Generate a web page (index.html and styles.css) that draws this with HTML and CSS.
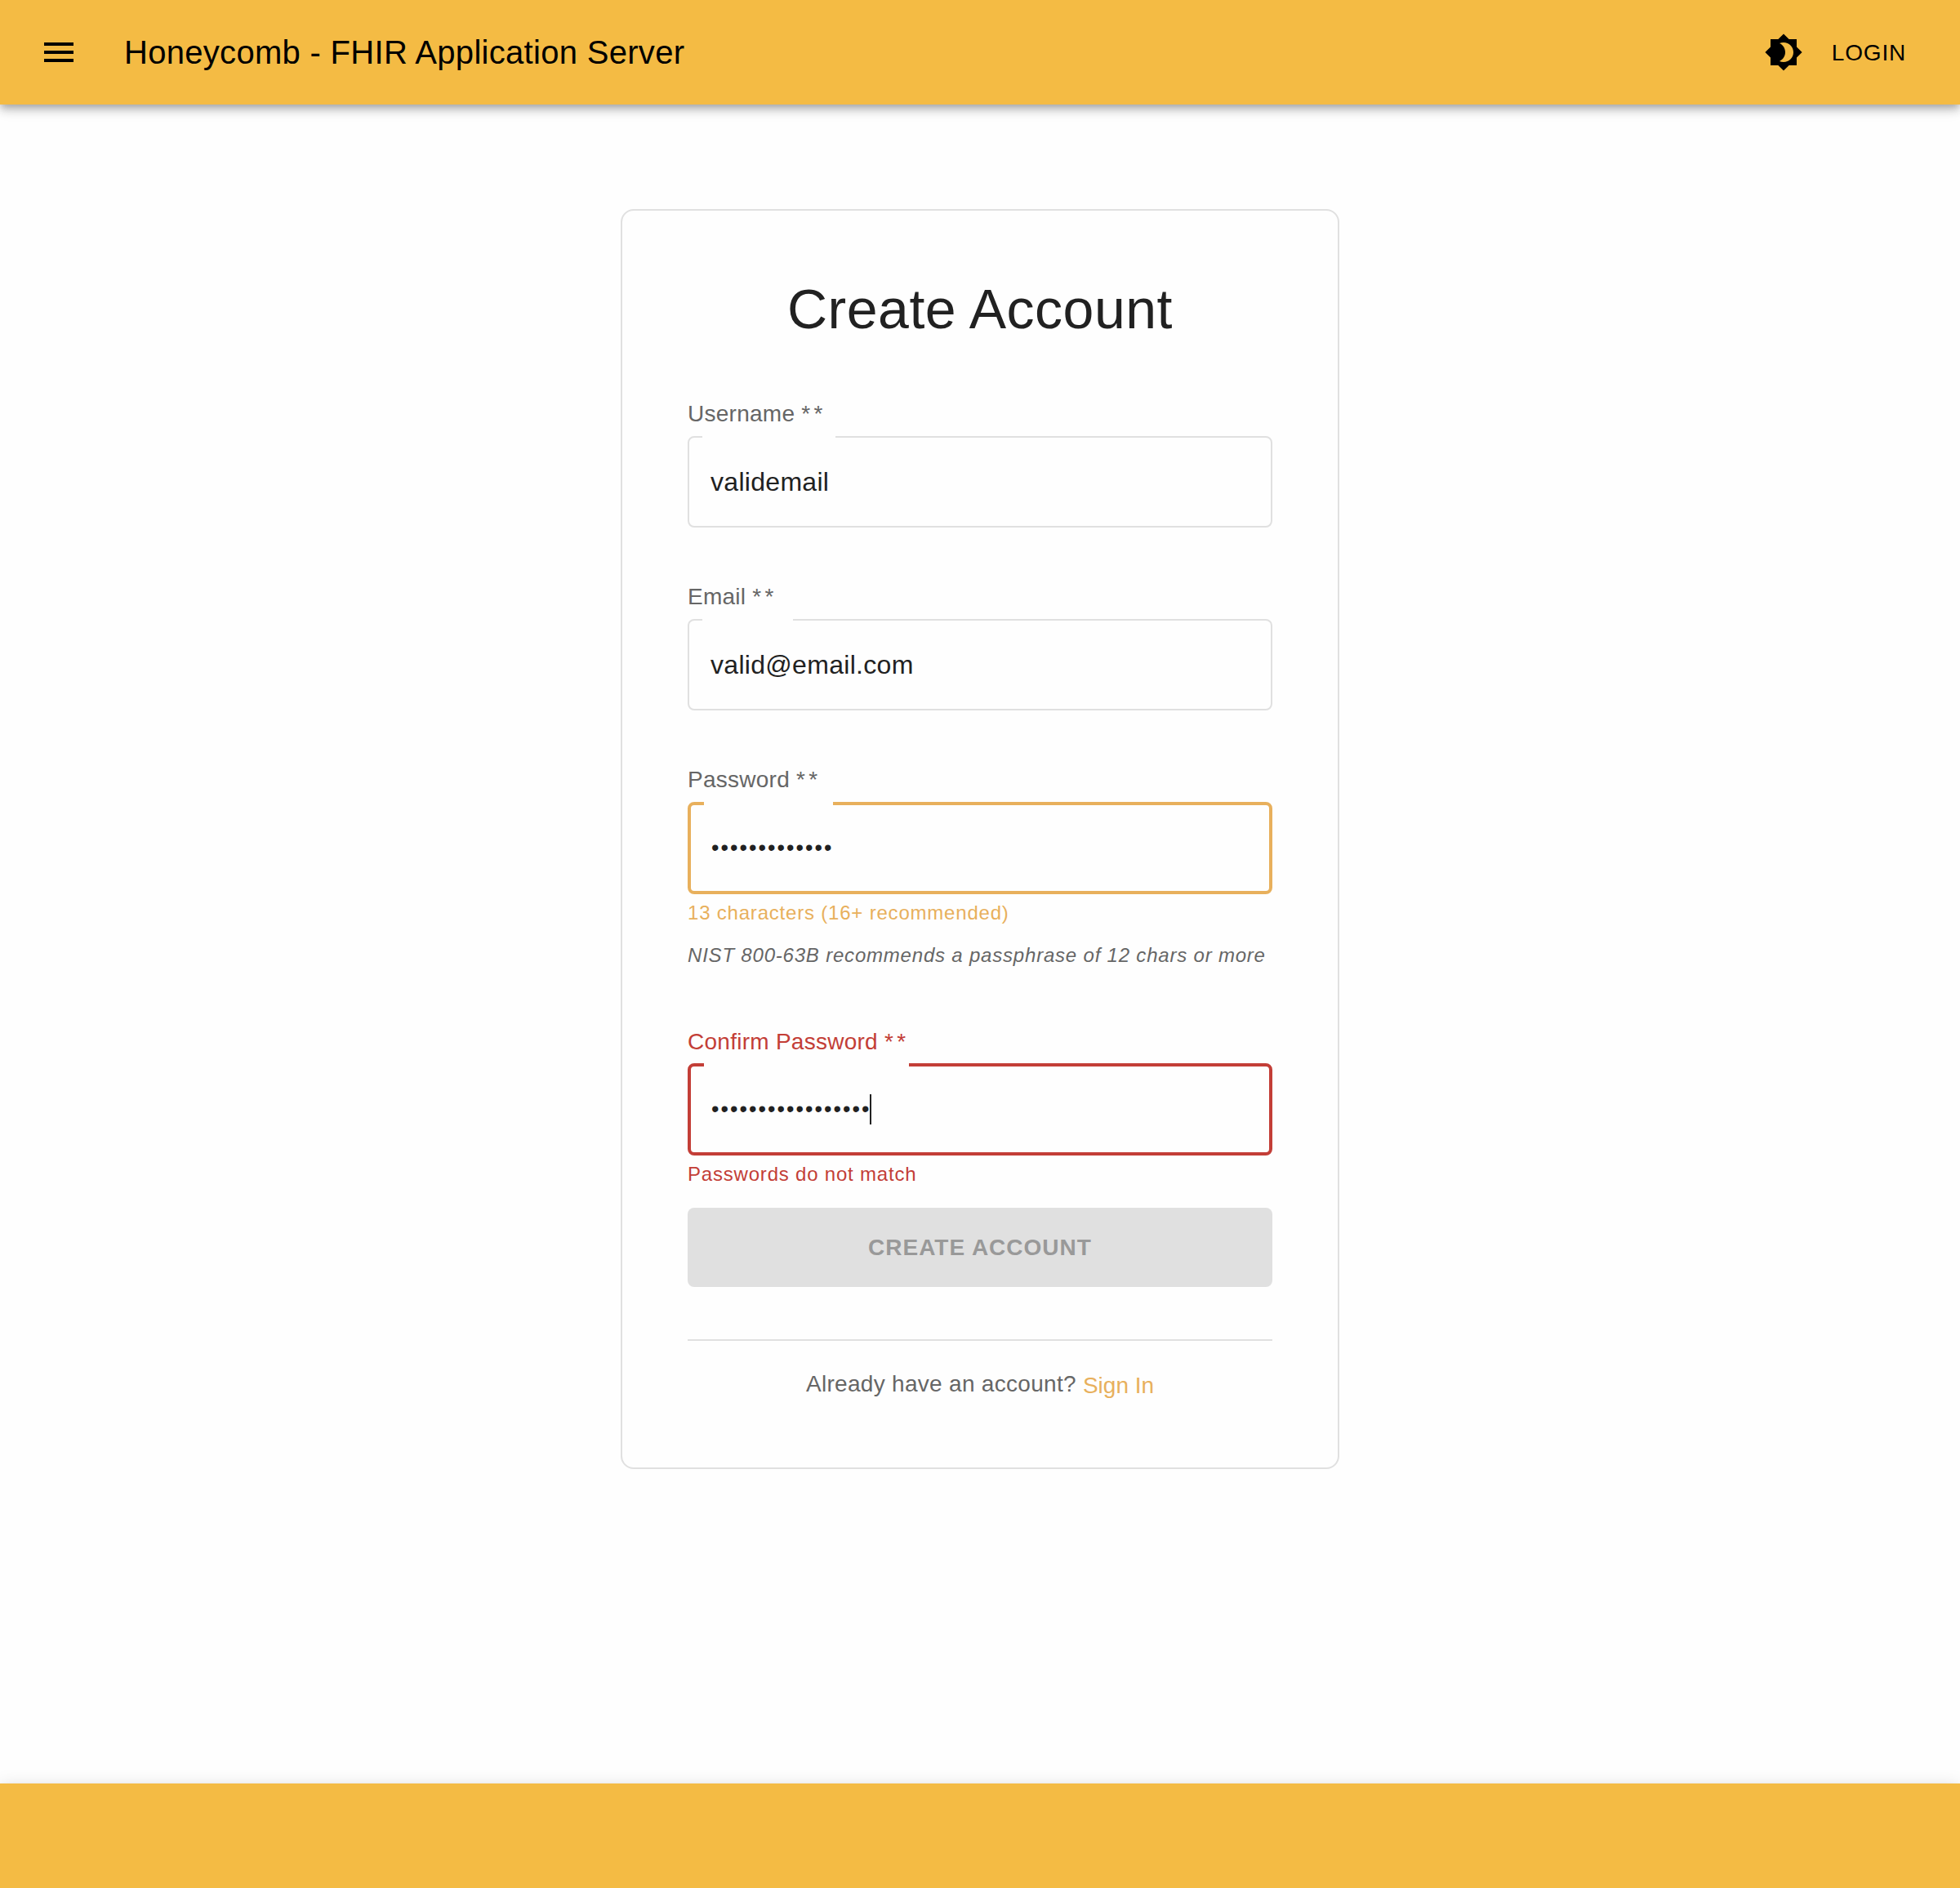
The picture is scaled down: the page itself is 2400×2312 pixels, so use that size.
FILE: index.html
```html
<!DOCTYPE html>
<html lang="en">
<head>
<meta charset="utf-8">
<title>Honeycomb - FHIR Application Server</title>
<link rel="stylesheet" href="styles.css">
</head>
<body>
<header class="app-bar">
  <svg class="icon" viewBox="0 0 24 24"><path d="M3 18h18v-2H3v2zm0-5h18v-2H3v2zm0-7v2h18V6H3z"/></svg>
  <div class="app-title">Honeycomb - FHIR Application Server</div>
  <svg class="icon" viewBox="0 0 24 24"><path d="M20 8.69V4h-4.69L12 .69 8.69 4H4v4.69L.69 12 4 15.31V20h4.69L12 23.31 15.31 20H20v-4.69L23.31 12 20 8.69zM12 18c-.89 0-1.74-.2-2.5-.55C11.56 16.5 13 14.42 13 12s-1.44-4.5-3.5-5.45C10.26 6.2 11.11 6 12 6c3.31 0 6 2.69 6 6s-2.69 6-6 6z"/></svg>
  <a class="login">LOGIN</a>
</header>
<main class="content">
  <section class="card">
    <h1 class="card-title">Create Account</h1>
    <div class="field">
      <div class="label">Username *<span class="required"> *</span></div>
      <div class="input"><span class="notch notch-username"></span>validemail</div>
    </div>
    <div class="field">
      <div class="label">Email *<span class="required"> *</span></div>
      <div class="input"><span class="notch notch-email"></span>valid@email.com</div>
    </div>
    <div class="field">
      <div class="label">Password *<span class="required"> *</span></div>
      <div class="input warning"><span class="notch notch-password"></span><span class="dots">•••••••••••••</span></div>
      <div class="helper helper-warning">13 characters (16+ recommended)</div>
      <div class="helper hint">NIST 800-63B recommends a passphrase of 12 chars or more</div>
    </div>
    <div class="field confirm">
      <div class="label label-error">Confirm Password *<span class="required"> *</span></div>
      <div class="input error"><span class="notch notch-confirm"></span><span class="dots">•••••••••••••••••</span><span class="caret"></span></div>
      <div class="helper helper-error">Passwords do not match</div>
    </div>
    <div class="submit">CREATE ACCOUNT</div>
    <div class="signin-row"><span>Already have an account?</span><a class="signin">Sign In</a></div>
  </section>
</main>
<footer class="footer"></footer>
</body>
</html>
```

FILE: styles.css
```css
* { box-sizing: border-box; }
body {
  margin: 0;
  min-height: 2312px;
  display: flex;
  flex-direction: column;
  background: #fefefe;
  color: #212121;
  font-family: "Liberation Sans", Arial, sans-serif;
}
.app-bar, .footer {
  flex: none;
  height: 128px;
  background: #f4bb44;
  box-shadow: 0 4px 8px -2px rgba(0,0,0,.2), 0 8px 10px 0 rgba(0,0,0,.14), 0 2px 20px 0 rgba(0,0,0,.12);
}
.app-bar {
  display: flex;
  align-items: center;
  padding: 0 66px 0 48px;
  color: #000;
}
.icon { width: 48px; height: 48px; flex: none; fill: currentColor; }
.app-title {
  flex: 1;
  margin-left: 56px;
  font-size: 40px;
  letter-spacing: .0075em;
}
.login { margin-left: 35px; padding-top: 2px; font-size: 28px; letter-spacing: .02857em; }
.content { flex: 1; padding-top: 128px; }
.card {
  width: 880px;
  margin: 0 auto;
  padding: 80px;
  border: 2px solid #e0e0e0;
  border-radius: 16px;
}
.card-title {
  margin: 0 0 68px;
  font-size: 68px;
  line-height: 81px;
  font-weight: 400;
  letter-spacing: .00735em;
  text-align: center;
}
.field { margin-bottom: 65px; }
.label {
  margin-bottom: 7px;
  font-size: 28px;
  line-height: 40px;
  letter-spacing: .00938em;
  color: #666;
}
.label-error { color: #c33e37; margin-bottom: 6px; }
.required { word-spacing: -4px; }
.input {
  position: relative;
  display: flex;
  align-items: center;
  height: 112px;
  padding-left: 26px;
  border: 2px solid #e0e0e0;
  border-radius: 8px;
  font-size: 32px;
  letter-spacing: .00938em;
}
.input.warning, .input.error { height: 113px; padding-left: 24px; border-width: 4px; }
.input.warning { border-color: #e8b05c; }
.input.error { border-color: #c33e37; }
.notch { position: absolute; left: 16px; top: -4px; height: 4px; background: #fefefe; }
.notch-username { width: 163px; }
.notch-email { width: 111px; }
.notch-password { width: 158px; }
.notch-confirm { width: 251px; }
.dots { margin-left: 1px; font-size: 27px; letter-spacing: 2.05px; }
.caret { width: 2px; height: 37px; margin-left: -1.5px; background: #212121; }
.helper {
  margin-top: 3px;
  font-size: 24px;
  line-height: 40px;
  letter-spacing: .03333em;
  white-space: nowrap;
}
.helper-warning { color: #e8b05c; }
.helper-error { color: #c33e37; }
.hint { margin-top: 12px; color: #666; font-style: italic; }
.confirm { margin: 66px 0 21px; }
.submit {
  display: flex;
  align-items: center;
  justify-content: center;
  height: 97px;
  margin-bottom: 64px;
  border-radius: 8px;
  background: #e0e0e0;
  color: #999;
  font-size: 28px;
  font-weight: 700;
  letter-spacing: .036em;
}
.signin-row {
  display: flex;
  justify-content: center;
  gap: 8px;
  padding-top: 33px;
  border-top: 2px solid #e0e0e0;
  color: #666;
  font-size: 28px;
  line-height: 40px;
  letter-spacing: .01071em;
}
.signin { padding-top: 2px; color: #e8b05c; letter-spacing: 0; }
```
